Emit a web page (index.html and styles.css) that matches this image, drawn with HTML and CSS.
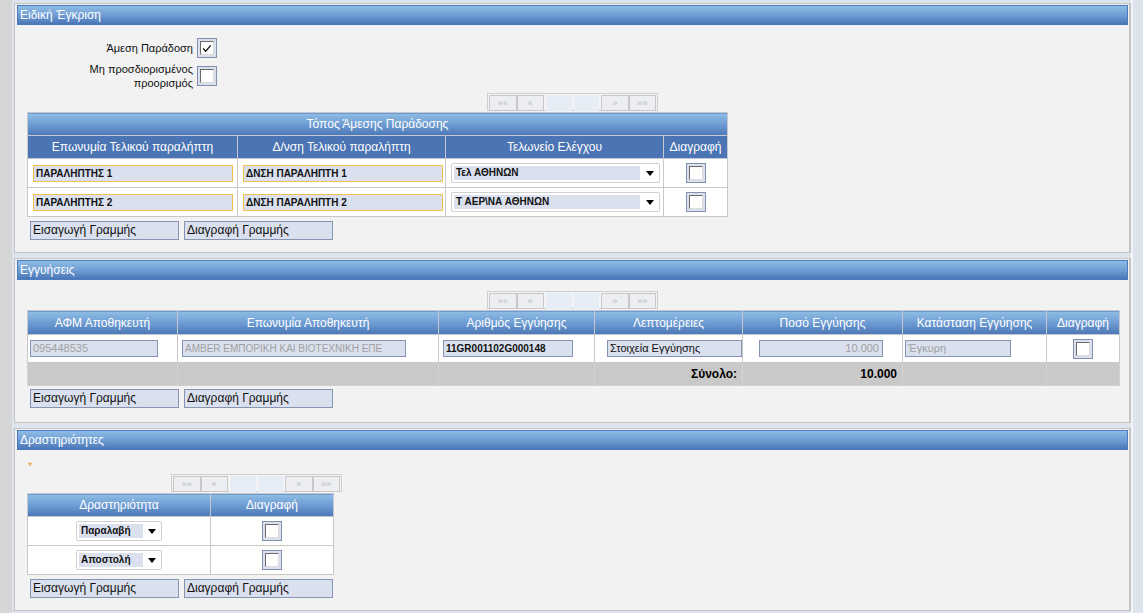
FILE: index.html
```html
<!DOCTYPE html>
<html>
<head>
<meta charset="utf-8">
<link rel="stylesheet" href="styles.css">
</head>
<body>
<div class="page">
  <div class="main">
    <section class="panel p1">
      <div class="ph">Ειδική Έγκριση</div>
      <div class="content">
        <div class="form">
          <div class="lbl">Άμεση Παράδοση</div>
          <span class="cb"><span class="cb-in"><svg viewBox="0 0 13 13" width="13" height="13"><path d="M2.5 6.5 L5 9.5 L10.5 3" fill="none" stroke="#000" stroke-width="1.3"/></svg></span></span>
          <div class="lbl two">Μη προσδιορισμένος<br>προορισμός</div>
          <span class="cb"><span class="cb-in"></span></span>
        </div>
        <div class="pager center">
          <span class="pb">««</span><span class="pb">«</span><span class="pe"></span><span class="pe"></span><span class="pb">»</span><span class="pb">»»</span>
        </div>
        <table class="grid t1">
          <colgroup><col style="width:210px"><col style="width:208px"><col style="width:218px"><col style="width:64px"></colgroup>
          <tr class="title"><th colspan="4">Τόπος Άμεσης Παράδοσης</th></tr>
          <tr class="hrow"><th>Επωνυμία Τελικού παραλήπτη</th><th>Δ/νση Τελικού παραλήπτη</th><th>Τελωνείο Ελέγχου</th><th>Διαγραφή</th></tr>
          <tr class="drow">
            <td><span class="inp req w200">ΠΑΡΑΛΗΠΤΗΣ 1</span></td>
            <td><span class="inp req w200">ΔΝΣΗ ΠΑΡΑΛΗΠΤΗ 1</span></td>
            <td><span class="sel w209"><span class="sel-t">Τελ ΑΘΗΝΩΝ</span><span class="arr"></span></span></td>
            <td class="c"><span class="cb"><span class="cb-in"></span></span></td>
          </tr>
          <tr class="drow">
            <td><span class="inp req w200">ΠΑΡΑΛΗΠΤΗΣ 2</span></td>
            <td><span class="inp req w200">ΔΝΣΗ ΠΑΡΑΛΗΠΤΗ 2</span></td>
            <td><span class="sel w209"><span class="sel-t">Τ ΑΕΡ\ΝΑ ΑΘΗΝΩΝ</span><span class="arr"></span></span></td>
            <td class="c"><span class="cb"><span class="cb-in"></span></span></td>
          </tr>
        </table>
        <div class="btns"><span class="btn">Εισαγωγή Γραμμής</span><span class="btn">Διαγραφή Γραμμής</span></div>
      </div>
    </section>

    <section class="panel p2">
      <div class="ph">Εγγυήσεις</div>
      <div class="content">
        <div class="pager center">
          <span class="pb">««</span><span class="pb">«</span><span class="pe"></span><span class="pe"></span><span class="pb">»</span><span class="pb">»»</span>
        </div>
        <table class="grid t2">
          <colgroup><col style="width:150px"><col style="width:261px"><col style="width:156px"><col style="width:148px"><col style="width:160px"><col style="width:144px"><col style="width:73px"></colgroup>
          <tr class="title"><th>ΑΦΜ Αποθηκευτή</th><th>Επωνυμία Αποθηκευτή</th><th>Αριθμός Εγγύησης</th><th>Λεπτομέρειες</th><th>Ποσό Εγγύησης</th><th>Κατάσταση Εγγύησης</th><th>Διαγραφή</th></tr>
          <tr class="drow2">
            <td class="l1"><span class="inp dis w128">095448535</span></td>
            <td><span class="inp dis caps w224">AMBER ΕΜΠΟΡΙΚΗ ΚΑΙ ΒΙΟΤΕΧΝΙΚΗ ΕΠΕ</span></td>
            <td><span class="inp bold w130">11GR001102G000148</span></td>
            <td class="l2"><span class="inp norm w135">Στοιχεία Εγγύησης</span></td>
            <td class="l3"><span class="inp dis num w124">10.000</span></td>
            <td class="l1"><span class="inp dis w106">Έγκυρη</span></td>
            <td class="c"><span class="cb"><span class="cb-in"></span></span></td>
          </tr>
          <tr class="tot">
            <td></td><td></td><td></td><td class="r">Σύνολο:</td><td class="r">10.000</td><td></td><td></td>
          </tr>
        </table>
        <div class="btns"><span class="btn">Εισαγωγή Γραμμής</span><span class="btn">Διαγραφή Γραμμής</span></div>
      </div>
    </section>

    <section class="panel p3">
      <div class="ph">Δραστηριότητες</div>
      <div class="content">
        <div class="star">*</div>
        <div class="pager left3">
          <span class="pb">««</span><span class="pb">«</span><span class="pe"></span><span class="pe"></span><span class="pb">»</span><span class="pb">»»</span>
        </div>
        <table class="grid t3">
          <colgroup><col style="width:183px"><col style="width:123px"></colgroup>
          <tr class="title"><th>Δραστηριότητα</th><th>Διαγραφή</th></tr>
          <tr class="drow">
            <td class="c"><span class="sel w86"><span class="sel-t s2">Παραλαβή</span><span class="arr"></span></span></td>
            <td class="c"><span class="cb"><span class="cb-in"></span></span></td>
          </tr>
          <tr class="drow">
            <td class="c"><span class="sel w86"><span class="sel-t s2">Αποστολή</span><span class="arr"></span></span></td>
            <td class="c"><span class="cb"><span class="cb-in"></span></span></td>
          </tr>
        </table>
        <div class="btns"><span class="btn">Εισαγωγή Γραμμής</span><span class="btn">Διαγραφή Γραμμής</span></div>
      </div>
    </section>
  </div>
  <div class="rstrip"></div>
</div>
</body>
</html>
```
FILE: styles.css
```css
html, body { margin: 0; padding: 0; }
body {
  width: 1143px;
  height: 613px;
  overflow: hidden;
  background: #dde4ee;
  font-family: "Liberation Sans", Arial, sans-serif;
  font-size: 12px;
  color: #000;
}
.page {
  display: flex;
  height: 613px;
  border-left: 12px solid #d6d6d6;
  box-sizing: border-box;
}
.main {
  width: 1119px;
  padding: 3px 0 0 2px;
  box-sizing: border-box;
  display: flex;
  flex-direction: column;
  gap: 5px;
}
.rstrip {
  width: 12px;
  border-left: 2px solid #f2f4f6;
  box-sizing: border-box;
  background: #dde4ee;
}
.panel {
  background: #f2f2f2;
  border: 1px solid #c4c4c4;
  border-right-width: 2px;
  padding: 1px 1px 0 2px;
  width: 1117px;
  box-sizing: border-box;
}
.p1 { height: 250px; }
.p2 { height: 165px; }
.p3 { height: 183px; }
.ph {
  height: 20px;
  box-sizing: border-box;
  border: 1px solid #4a7bc0;
  background: linear-gradient(#8fbde5, #6c9ad2 55%, #4b77b7);
  color: #fff;
  font-size: 12px;
  line-height: 18px;
  padding-left: 2px;
}
.content { padding-left: 10px; }

/* form */
.form {
  display: grid;
  grid-template-columns: 166px 20px;
  column-gap: 4px;
  row-gap: 4px;
  align-items: center;
  margin-top: 13px;
}
.lbl { text-align: right; color: #111; line-height: 14px; font-size: 11px; }
.cb {
  display: inline-flex;
  width: 20px; height: 20px;
  box-sizing: border-box;
  border: 1px solid #8290ae;
  background: #dae0ee;
  align-items: center;
  justify-content: center;
}
.cb-in {
  width: 14px; height: 14px;
  box-sizing: border-box;
  background: #fff;
  border-top: 1px solid #6a6a6a;
  border-left: 1px solid #6a6a6a;
  border-right: 1px solid #dcdcdc;
  border-bottom: 1px solid #dcdcdc;
  display: flex;
  align-items: center;
  justify-content: center;
}
.cb-in svg { display: block; }

/* pager */
.pager {
  display: flex;
  width: 171px;
  height: 18px;
  box-sizing: border-box;
  border: 1px solid #cfcfcf;
  padding: 1px;
  background: #f4f4f4;
}
.p1 .pager { margin: 3px 0 1px 460px; }
.p2 .pager { margin: 11px 0 1px 460px; }
.pager.left3 { margin: 4px 0 1px 144px; }
.pb {
  width: 28px; height: 16px;
  box-sizing: border-box;
  border: 1px solid #c8c8c8;
  background: #eceef2;
  color: #b4b8c0;
  font-size: 9px;
  line-height: 14px;
  text-align: center;
}
.pe {
  width: 26px; height: 16px;
  background: #e6edf7;
  margin: 0 1px;
}
.pb + .pe { margin-left: 2px; }
.pe + .pb { margin-left: 1px; }

/* tables */
.grid {
  border-collapse: collapse;
  table-layout: fixed;
  background: #fff;
}
.grid th {
  color: #fff;
  font-weight: normal;
  font-size: 12px;
  padding: 0;
  border: 1px solid #c4c8d0;
  text-align: center;
}
.grid .title th {
  height: 22px;
  background: linear-gradient(#8fbde5, #6a98d0 55%, #4b77b7);
}
.grid .hrow th {
  height: 22px;
  background: #4a74b3;
}
.grid td {
  border: 1px solid #c8c8c8;
  padding: 0 5px;
  height: 28px;
}
.grid td.c { text-align: center; padding: 0; }
.t1 { width: 700px; }
.t2 { width: 1092px; }
.t2 .title th { height: 23px; }
.t2 td { height: 27px; padding: 0 4px; }
.t2 td.l1 { padding-left: 2px; }
.t2 td.l2 { padding-left: 12px; }
.t2 td.l3 { padding-left: 16px; }
.t3 { width: 306px; }
.tot td {
  background: #c9c9c9;
  height: 22px;
  font-weight: bold;
  font-size: 12px;
  border-color: #d2d2d2;
}
.tot td.r { text-align: right; padding-right: 5px; }
.grid td .cb { vertical-align: middle; }

/* inputs */
.inp {
  display: inline-block;
  height: 17px;
  box-sizing: border-box;
  background: #dae0ee;
  border: 1px solid #8494b2;
  font-size: 11px;
  line-height: 15px;
  padding-left: 2px;
  white-space: nowrap;
  overflow: hidden;
  vertical-align: middle;
}
.inp.req { border-color: #f2c04a; font-weight: bold; color: #111; font-size: 10px; }
.inp.dis { color: #a0a0a0; }
.inp.caps { font-size: 10px; }
.inp.bold { font-weight: bold; color: #111; font-size: 10px; }
.inp.norm { color: #111; }
.inp.num { text-align: right; padding-right: 3px; }
.w200 { width: 200px; }
.w128 { width: 128px; }
.w224 { width: 224px; }
.w130 { width: 130px; }
.w135 { width: 135px; }
.w124 { width: 124px; }
.w106 { width: 106px; }

.sel {
  display: inline-flex;
  align-items: center;
  height: 20px;
  box-sizing: border-box;
  border: 1px solid #d0d0d0;
  border-radius: 2px;
  background: #fff;
  padding: 0 2px;
  vertical-align: middle;
  text-align: left;
}
.w209 { width: 209px; }
.w86 { width: 86px; }
.sel-t {
  flex: 0 0 auto;
  width: 186px;
  height: 14px;
  background: #dae0ee;
  font-size: 10px;
  font-weight: bold;
  line-height: 14px;
  padding-left: 2px;
  box-sizing: border-box;
  color: #111;
  white-space: nowrap;
  overflow: hidden;
}
.sel-t.s2 { width: 64px; }
.arr {
  margin-left: auto;
  margin-right: 3px;
  width: 0; height: 0;
  border-left: 4px solid transparent;
  border-right: 4px solid transparent;
  border-top: 5px solid #000;
}

/* buttons */
.btns {
  display: flex;
  gap: 5px;
  margin: 4px 0 0 3px;
}
.t2 + .btns { margin-top: 3px; }
.btn {
  display: inline-block;
  width: 149px;
  height: 19px;
  box-sizing: border-box;
  background: #dae0ee;
  border: 1px solid #8494b2;
  font-size: 12px;
  line-height: 17px;
  padding-left: 2px;
  color: #111;
}
.star {
  color: #f0a030;
  font-size: 11px;
  height: 12px;
  line-height: 16px;
  margin-top: 8px;
  padding-left: 1px;
}
```
